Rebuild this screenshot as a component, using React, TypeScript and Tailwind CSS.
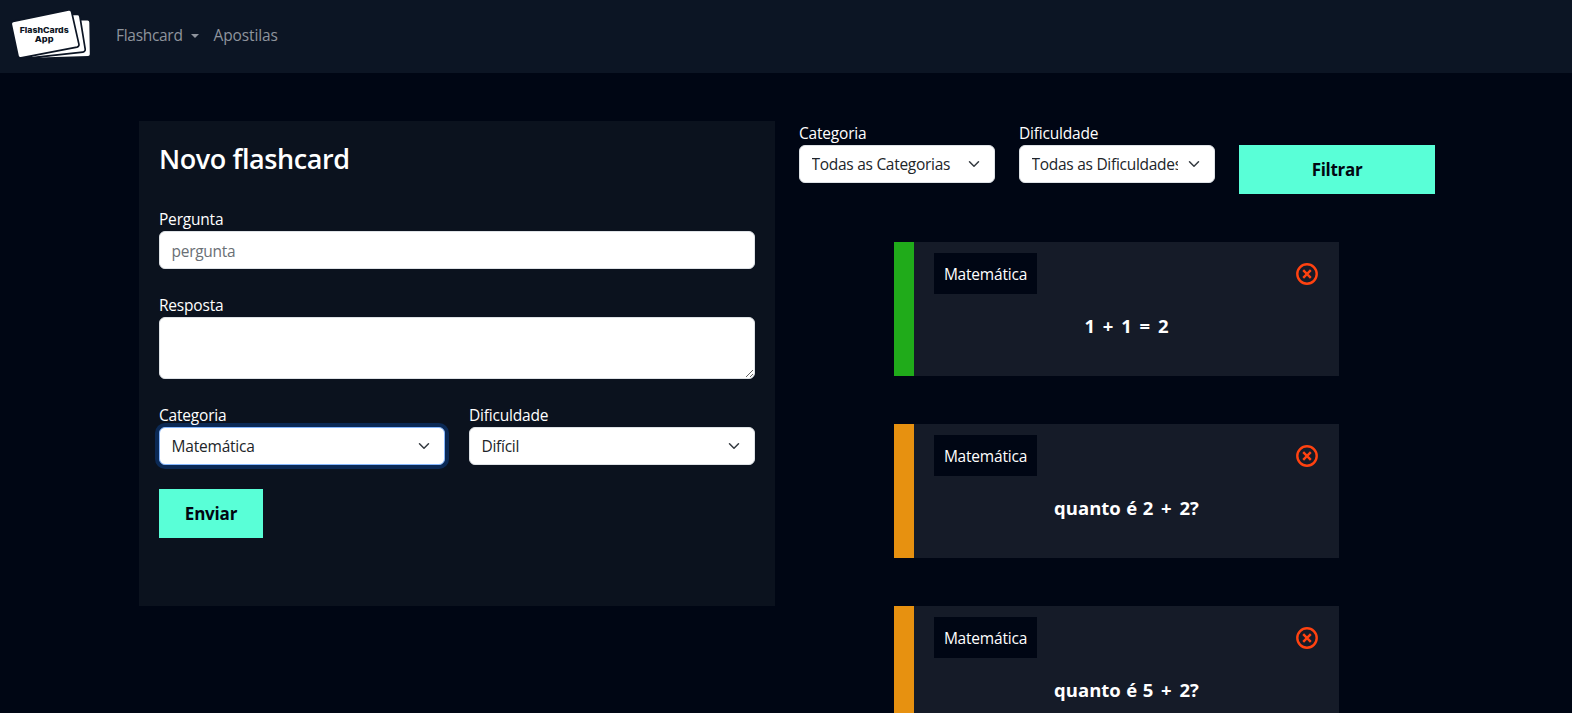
function Logo() {
  return (
    <svg width="80" height="53" viewBox="0 0 80 53" className="block" fill="#fff">
      <path d="M67 10.600h9.500a1.800 1.800 0 0 1 1.800 1.800l.5 31.800a1.800 1.800 0 0 1-1.700 1.800L28 47.500l46-6z" />
      <g stroke="#0c1524" strokeWidth="1.700">
        <path d="M58 4.500l8.300-.2a2.600 2.600 0 0 1 2.600 2.200l5.300 32.600a2.600 2.600 0 0 1-2.300 3L19 47.800z" />
        <path d="M2.200 11.400 57.600-.1a2.500 2.500 0 0 1 3 1.900l7.300 32.300a2.500 2.500 0 0 1-1.900 3L10 47.900a2.500 2.500 0 0 1-3-1.900L.3 14.400a2.500 2.500 0 0 1 1.900-3z" />
      </g>
      <g fill="#0c1524" fontFamily="Inter, sans-serif" fontWeight="800" fontSize="8">
        <text x="8.700" y="23.200" textLength="49" lengthAdjust="spacingAndGlyphs">FlashCards</text>
        <text x="23.800" y="32.300" textLength="18.800" lengthAdjust="spacingAndGlyphs">App</text>
      </g>
    </svg>
  );
}

const label = "block h-6 text-[15.500px] leading-[25px] tracking-[-0.2px] text-white";
const control = "h-[38px] w-full rounded-md border border-[#dee2e6] bg-white text-[15.500px] tracking-[-0.28px] text-[#212529]";

function Select({ text, focused }: { text: string; focused?: boolean }) {
  return (
    <div
      className={
        focused
          ? "flex h-[38px] w-full items-center rounded-md border border-[#86b7fe] bg-white pr-3 pl-[11.500px] text-[15.500px] tracking-[-0.2px] text-[#212529] shadow-[0_0_0_4px_rgba(13,110,253,0.25)]"
          : control + " flex items-center pr-3 pl-[11.500px]"
      }
    >
      <span className="min-w-0 flex-1 overflow-hidden pt-0.5 whitespace-nowrap">{text}</span>
      <svg className="ml-2 h-3 w-4 shrink-0" viewBox="0 0 16 16" fill="none" stroke="#343a40" strokeWidth="2" strokeLinecap="round" strokeLinejoin="round">
        <path d="m2 5 6 6 6-6" />
      </svg>
    </div>
  );
}

function DeleteIcon() {
  return (
    <svg className="size-6" viewBox="0 0 24 24" fill="none" stroke="#ff4210" strokeWidth="2.400">
      <circle cx="12" cy="12" r="9.700" />
      <path d="m8.200 8.200 7.600 7.600M15.800 8.200l-7.600 7.600" />
    </svg>
  );
}

function Card({ bar, text }: { bar: string; text: string }) {
  return (
    <article className={"h-[134px] w-[445px] shrink-0 border-l-[20px] bg-[#151b28] px-5 pt-[11px] " + bar}>
      <div className="flex items-center justify-between">
        <span className="flex h-[41px] w-[103px] items-center justify-center bg-[#000614] pt-0.5 text-[15.500px] tracking-[-0.2px]">Matemática</span>
        <DeleteIcon />
      </div>
      <h2 className="mt-5 text-center text-[18.500px] leading-6 font-bold [word-spacing:0.700px] whitespace-nowrap">
        {text.split(/([+=])/).map((part, i) =>
          i % 2 ? <span key={i} className="mx-[2.300px]">{part}</span> : part
        )}
      </h2>
    </article>
  );
}

export default function App() {
  return (
    <div className="h-[713px] overflow-hidden bg-[#000614] font-['Open_Sans',sans-serif] text-white">
      <nav className="flex h-[73px] items-center bg-[#0c1524] pl-[11px]">
        <Logo />
        <div className="flex items-center pb-0.5 pl-[25px] text-[15.500px] text-[#8f949d]">
          <a className="flex items-center tracking-[-0.3px]">
            Flashcard
            <span className="ml-2 border-x-4 border-t-4 border-x-transparent border-t-[#8f949d]" />
          </a>
          <a className="ml-[15px] tracking-[-0.12px]">Apostilas</a>
        </div>
      </nav>
      <main className="flex gap-6 pt-12 pl-[139px]">
        <form className="h-[485px] w-[636px] bg-[#0b121e] p-5">
          <h1 className="h-[34px] pt-px text-[27px] leading-[34px] font-semibold tracking-[-0.4px]">Novo flashcard</h1>
          <label className={label + " mt-8"}>Pergunta</label>
          <input className={control + " block px-[11.500px] pt-px placeholder:text-[#6a6f75]"} placeholder="pergunta" />
          <label className={label + " mt-6"}>Resposta</label>
          <textarea className="block h-[62px] w-full resize-y rounded-md border border-[#dee2e6] bg-white" />
          <div className="mt-6 grid grid-cols-2 gap-6">
            <div>
              <label className={label}>Categoria</label>
              <Select text="Matemática" focused />
            </div>
            <div>
              <label className={label}>Dificuldade</label>
              <Select text="Difícil" />
            </div>
          </div>
          <button type="button" className="mt-6 block h-[49px] w-[104px] bg-[#59ffd7] text-[17px] font-bold tracking-[-0.2px] text-[#020611]">Enviar</button>
        </form>
        <section className="flex w-[636px] flex-col">
          <div className="grid grid-cols-3 items-end gap-6">
            <div className="mb-[11px]">
              <label className={label}>Categoria</label>
              <Select text="Todas as Categorias" />
            </div>
            <div className="mb-[11px]">
              <label className={label}>Dificuldade</label>
              <Select text="Todas as Dificuldades" />
            </div>
            <button type="button" className="h-[49px] bg-[#59ffd7] text-[17px] font-bold tracking-[-0.3px] text-[#020611]">Filtrar</button>
          </div>
          <div className="mt-12 flex flex-col gap-12 pl-[95px]">
            <Card bar="border-[#20ab1a]" text="1 + 1 = 2" />
            <Card bar="border-[#e79110]" text="quanto é 2 + 2?" />
            <Card bar="border-[#e79110]" text="quanto é 5 + 2?" />
          </div>
        </section>
      </main>
    </div>
  );
}
